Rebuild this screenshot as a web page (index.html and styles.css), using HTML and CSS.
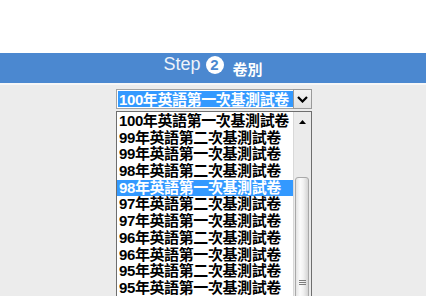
FILE: index.html
```html
<!DOCTYPE html>
<html lang="zh-Hant">
<head>
<meta charset="utf-8">
<title>Step 2 卷別</title>
<link rel="stylesheet" href="styles.css">
</head>
<body>
<div class="top"></div>
<div class="bar">
  <span class="step">Step</span>
  <span class="num">2</span>
  <span class="title">卷別</span>
</div>
<div class="main">
  <div class="picker">
    <div class="combo">
      <div class="value"><span class="value-text">100年英語第一次基測試卷</span></div>
      <div class="btn">
        <svg width="11" height="7" viewBox="0 0 11 7"><path d="M1 1 L5.5 5.5 L10 1" fill="none" stroke="#000" stroke-width="2.2"/></svg>
      </div>
    </div>
    <div class="list">
      <div class="options">
        <div class="opt">100年英語第一次基測試卷</div>
        <div class="opt">99年英語第二次基測試卷</div>
        <div class="opt">99年英語第一次基測試卷</div>
        <div class="opt">98年英語第二次基測試卷</div>
        <div class="opt sel">98年英語第一次基測試卷</div>
        <div class="opt">97年英語第二次基測試卷</div>
        <div class="opt">97年英語第一次基測試卷</div>
        <div class="opt">96年英語第二次基測試卷</div>
        <div class="opt">96年英語第一次基測試卷</div>
        <div class="opt">95年英語第二次基測試卷</div>
        <div class="opt">95年英語第一次基測試卷</div>
      </div>
      <div class="scroll">
        <div class="up">
          <svg width="7" height="4" viewBox="0 0 7 4"><path d="M0 4 L3.5 0 L7 4 Z" fill="#000"/></svg>
        </div>
        <div class="track"></div>
        <div class="thumb">
          <div class="grip"><i></i><i></i><i></i></div>
        </div>
      </div>
    </div>
  </div>
</div>
</body>
</html>
```
FILE: styles.css
```css
html, body {
  margin: 0;
  height: 100%;
  overflow: hidden;
}
body {
  background: #ececec;
  font-family: "Liberation Sans", "Noto Sans CJK TC", sans-serif;
}
.top {
  height: 53px;
  background: #fff;
}
.bar {
  height: 30px;
  background: #4b88d0;
  border-bottom: 2px solid #f7f7f7;
  display: flex;
  justify-content: center;
  align-items: flex-start;
  color: #fff;
}
.step {
  font-size: 18px;
  line-height: 18px;
  margin-top: 2px;
  color: #eef3fa;
}
.num {
  width: 18px;
  height: 18px;
  margin: 3px 9px 0 5px;
  border-radius: 50%;
  background: #fff;
  color: #4b88d0;
  font-weight: bold;
  font-size: 15px;
  line-height: 18px;
  text-align: center;
}
.title {
  font-size: 15px;
  line-height: 15px;
  font-weight: bold;
  margin-top: 9px;
}
.main {
  padding-top: 4px;
}
.picker {
  width: 196px;
  margin-left: calc(50% - 97px);
}
.combo {
  display: flex;
  height: 20px;
}
.value {
  flex: 1;
  border: 1px solid #a3a3a3;
  border-right: none;
  background: #fff;
  padding: 1px 0 1px 1px;
  display: flex;
}
.value-text {
  flex: 1;
  background: #3399ff;
  color: #fff;
  font-size: 15px;
  font-weight: bold;
  letter-spacing: -0.4px;
  line-height: 18px;
  padding-left: 1px;
  white-space: nowrap;
  overflow: hidden;
}
.btn {
  width: 17px;
  border: 1px solid #9a9a9a;
  background: linear-gradient(#f4f4f4, #e2e2e2);
  display: flex;
  align-items: center;
  justify-content: center;
}
.list {
  margin-top: 2px;
  height: 200px;
  display: flex;
  border: 1px solid #6e6e6e;
  background: #fff;
}
.options {
  flex: 1;
  min-width: 0;
  padding-top: 1px;
}
.opt {
  height: 16.7px;
  line-height: 16.7px;
  padding-left: 2px;
  font-size: 15px;
  font-weight: bold;
  letter-spacing: -0.4px;
  color: #000;
  white-space: nowrap;
  overflow: hidden;
}
.opt.sel {
  background: #3399ff;
  color: #fff;
}
.scroll {
  width: 17px;
  background: #ebebeb;
  border-left: 1px solid #d8d8d8;
  display: flex;
  flex-direction: column;
}
.up {
  height: 20px;
  display: flex;
  align-items: center;
  justify-content: center;
}
.track {
  height: 45px;
}
.thumb {
  flex: 1;
  margin: 0 2px 0 1px;
  border: 1px solid #a9a9a9;
  border-radius: 3px 3px 0 0;
  background: linear-gradient(to right, #e4e4e4, #fbfbfb 35%, #f2f2f2 60%, #d4d4d4);
  padding-top: 102px;
}
.grip {
  display: flex;
  flex-direction: column;
  align-items: center;
  gap: 1px;
}
.grip i {
  width: 7px;
  height: 1px;
  background: #7d7d7d;
}
```
